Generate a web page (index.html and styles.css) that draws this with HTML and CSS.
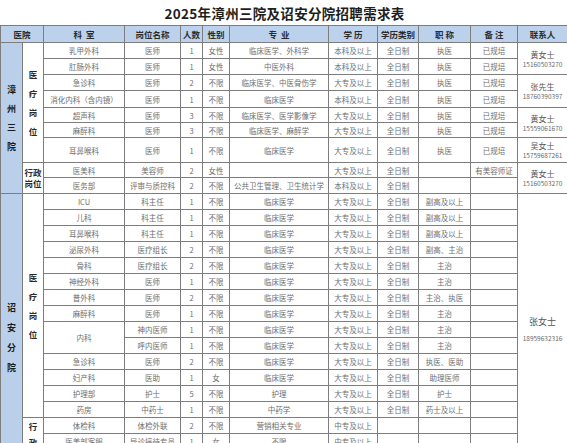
FILE: index.html
```html
<!DOCTYPE html>
<html lang="zh">
<head>
<meta charset="utf-8">
<title>2025年漳州三院及诏安分院招聘需求表</title>
<link rel="stylesheet" href="styles.css">
</head>
<body>
<div class="page">
  <h1 class="title">2025年漳州三院及诏安分院招聘需求表</h1>
  <table class="grid">
    <colgroup>
      <col class="c1"><col class="c2"><col class="c3"><col class="c4"><col class="c5"><col class="c6">
      <col class="c7"><col class="c8"><col class="c9"><col class="c10"><col class="c11"><col class="c12">
    </colgroup>
    <thead>
      <tr class="head">
        <th colspan="2">医院</th>
        <th>科&nbsp;&nbsp;室</th>
        <th>岗位名称</th>
        <th>人数</th>
        <th>性别</th>
        <th>专&nbsp;&nbsp;业</th>
        <th>学&nbsp;历</th>
        <th>学历类别</th>
        <th>职&nbsp;称</th>
        <th>备&nbsp;注</th>
        <th>联系人</th>
      </tr>
    </thead>
    <tbody>
      <tr class="r16">
        <td class="hosp" rowspan="9"><span class="vt vt19">漳<br>州<br>三<br>院</span></td>
        <td class="grp" rowspan="7"><span class="vt vt19">医<br>疗<br>岗<br>位</span></td>
        <td>乳甲外科</td><td>医师</td><td>1</td><td>女性</td><td>临床医学、外科学</td><td>本科及以上</td><td>全日制</td><td>执医</td><td>已规培</td>
        <td class="contact" rowspan="2"><span class="name">黄女士</span><span class="tel">15160503270</span></td>
      </tr>
      <tr class="r16"><td>肛肠外科</td><td>医师</td><td>1</td><td>女性</td><td>中医外科</td><td>本科及以上</td><td>全日制</td><td>执医</td><td>已规培</td></tr>
      <tr class="r16">
        <td>急诊科</td><td>医师</td><td>2</td><td>不限</td><td>临床医学、中医骨伤学</td><td>大专及以上</td><td>全日制</td><td>执医</td><td>已规培</td>
        <td class="contact" rowspan="2"><span class="name">张先生</span><span class="tel">18760390397</span></td>
      </tr>
      <tr class="r17"><td>消化内科（含内镜）</td><td>医师</td><td>1</td><td>不限</td><td>临床医学</td><td>本科及以上</td><td>全日制</td><td>执医</td><td>已规培</td></tr>
      <tr class="r15">
        <td>超声科</td><td>医师</td><td>3</td><td>不限</td><td>临床医学、医学影像学</td><td>大专及以上</td><td>全日制</td><td>执医</td><td>已规培</td>
        <td class="contact" rowspan="2"><span class="name">黄女士</span><span class="tel">15559061670</span></td>
      </tr>
      <tr class="r15"><td>麻醉科</td><td>医师</td><td>3</td><td>不限</td><td>临床医学、麻醉学</td><td>大专及以上</td><td>全日制</td><td>执医</td><td>已规培</td></tr>
      <tr class="r25">
        <td>耳鼻喉科</td><td>医师</td><td>1</td><td>不限</td><td>临床医学</td><td>大专及以上</td><td>全日制</td><td>执医</td><td>已规培</td>
        <td class="contact"><span class="name">吴女士</span><span class="tel">15759687261</span></td>
      </tr>
      <tr class="r15">
        <td class="grp grp-h" rowspan="2">行政<br>岗位</td>
        <td>医美科</td><td>美容师</td><td>2</td><td>女性</td><td></td><td>大专及以上</td><td>全日制</td><td></td><td>有美容师证</td>
        <td class="contact" rowspan="2"><span class="name">黄女士</span><span class="tel">15160503270</span></td>
      </tr>
      <tr class="r16"><td>医务部</td><td>评审与质控科</td><td>2</td><td>不限</td><td>公共卫生管理、卫生统计学</td><td>本科及以上</td><td>全日制</td><td></td><td></td></tr>

      <tr class="r16">
        <td class="hosp" rowspan="18"><span class="vt vt20">诏<br>安<br>分<br>院</span></td>
        <td class="grp" rowspan="14"><span class="vt vt18">医<br>疗<br>岗<br>位</span></td>
        <td>ICU</td><td>科主任</td><td>1</td><td>不限</td><td>临床医学</td><td>大专及以上</td><td>全日制</td><td>副高及以上</td><td></td>
        <td class="contact contact-big" rowspan="18"><span class="name">张女士</span><span class="tel">18959632316</span></td>
      </tr>
      <tr class="r16"><td>儿科</td><td>科主任</td><td>1</td><td>不限</td><td>临床医学</td><td>大专及以上</td><td>全日制</td><td>副高及以上</td><td></td></tr>
      <tr class="r16"><td>耳鼻喉科</td><td>科主任</td><td>1</td><td>不限</td><td>临床医学</td><td>大专及以上</td><td>全日制</td><td>副高及以上</td><td></td></tr>
      <tr class="r16"><td>泌尿外科</td><td>医疗组长</td><td>2</td><td>不限</td><td>临床医学</td><td>大专及以上</td><td>全日制</td><td>副高、主治</td><td></td></tr>
      <tr class="r16"><td>骨科</td><td>医疗组长</td><td>2</td><td>不限</td><td>临床医学</td><td>大专及以上</td><td>全日制</td><td>主治</td><td></td></tr>
      <tr class="r16"><td>神经外科</td><td>医师</td><td>1</td><td>不限</td><td>临床医学</td><td>大专及以上</td><td>全日制</td><td>主治</td><td></td></tr>
      <tr class="r16"><td>普外科</td><td>医师</td><td>2</td><td>不限</td><td>临床医学</td><td>大专及以上</td><td>全日制</td><td>主治、执医</td><td></td></tr>
      <tr class="r16"><td>麻醉科</td><td>医师</td><td>1</td><td>不限</td><td>临床医学</td><td>大专及以上</td><td>全日制</td><td>主治</td><td></td></tr>
      <tr class="r16"><td rowspan="2">内科</td><td>神内医师</td><td>1</td><td>不限</td><td>临床医学</td><td>大专及以上</td><td>全日制</td><td>主治</td><td></td></tr>
      <tr class="r16"><td>呼内医师</td><td>1</td><td>不限</td><td>临床医学</td><td>大专及以上</td><td>全日制</td><td>主治</td><td></td></tr>
      <tr class="r16"><td>急诊科</td><td>医师</td><td>2</td><td>不限</td><td>临床医学</td><td>大专及以上</td><td>全日制</td><td>执医、医助</td><td></td></tr>
      <tr class="r16"><td>妇产科</td><td>医助</td><td>1</td><td>女</td><td>临床医学</td><td>大专及以上</td><td>全日制</td><td>助理医师</td><td></td></tr>
      <tr class="r16"><td>护理部</td><td>护士</td><td>5</td><td>不限</td><td>护理</td><td>大专及以上</td><td>全日制</td><td>护士</td><td></td></tr>
      <tr class="r16"><td>药房</td><td>中药士</td><td>1</td><td>不限</td><td>中药学</td><td>大专及以上</td><td>全日制</td><td>药士及以上</td><td></td></tr>
      <tr class="r16">
        <td class="grp" rowspan="4"><span class="vt vt16">行<br>政<br>岗<br>位</span></td>
        <td>体检科</td><td>体检外联</td><td>2</td><td>不限</td><td>营销相关专业</td><td>中专及以上</td><td></td><td></td><td></td>
      </tr>
      <tr class="r16"><td>医美部客服</td><td>导诊接待专员</td><td>1</td><td>女</td><td>不限</td><td>中专及以上</td><td></td><td></td><td></td></tr>
      <tr class="r16"><td>后勤部</td><td>司机</td><td>1</td><td>男</td><td>不限</td><td>中专及以上</td><td></td><td></td><td></td></tr>
      <tr class="r16"><td>收费处</td><td>收费员</td><td>1</td><td>不限</td><td>不限</td><td>中专及以上</td><td></td><td></td><td></td></tr>
    </tbody>
  </table>
</div>
</body>
</html>
```
FILE: styles.css
```css
html, body {
  margin: 0;
  padding: 0;
  background: #ffffff;
}
.page {
  width: 567px;
  height: 443px;
  overflow: hidden;
  font-family: "Noto Sans CJK SC", "Liberation Sans", sans-serif;
}
.title {
  margin: 0;
  height: 25px;
  line-height: 26px;
  text-align: center;
  font-size: 13.5px;
  font-weight: 700;
  color: #1e1e1e;
  letter-spacing: 0.3px;
  padding-left: 2px;
}
.grid {
  border-collapse: collapse;
  table-layout: fixed;
  width: 567px;
}
.c1 { width: 22px; }
.c2 { width: 21px; }
.c3 { width: 81px; }
.c4 { width: 56px; }
.c5 { width: 22px; }
.c6 { width: 27px; }
.c7 { width: 99px; }
.c8 { width: 49px; }
.c9 { width: 41px; }
.c10 { width: 52px; }
.c11 { width: 47px; }
.c12 { width: 50px; }
.grid th, .grid td {
  border: 1px solid #7d7d7d;
  padding: 0;
  text-align: center;
  vertical-align: middle;
  white-space: nowrap;
  overflow: hidden;
}
.grid td {
  font-size: 7.5px;
  line-height: 9px;
  color: #6e6e6e;
}
.head {
  height: 17px;
}
.head th {
  background: #bcd2ec;
  font-size: 8.5px;
  line-height: 10px;
  font-weight: 700;
  color: #2a2a2a;
}
.r15 { height: 15px; }
.r16 { height: 16px; }
.r17 { height: 17px; }
.r25 { height: 25px; }
.grid td.hosp {
  background: #b9cfea;
  font-weight: 700;
  color: #1c1c1c;
  font-size: 9px;
}
.grid td.grp {
  font-weight: 700;
  color: #2a2a2a;
  font-size: 8.5px;
}
.grid td.grp-h {
  line-height: 11px;
}
.vt {
  display: inline-block;
}
.vt19 { line-height: 19px; }
.vt20 { line-height: 20px; }
.vt18 { line-height: 19px; }
.vt16 { line-height: 16px; }
.contact .name {
  display: block;
  font-size: 8px;
  line-height: 11px;
  color: #555;
}
.contact .tel {
  display: block;
  font-size: 6.5px;
  line-height: 9px;
  color: #6a6a6a;
}
.grid td.contact-big {
  padding-bottom: 18px;
}
.contact-big .name {
  font-size: 9px;
  margin-bottom: 7px;
}
```
